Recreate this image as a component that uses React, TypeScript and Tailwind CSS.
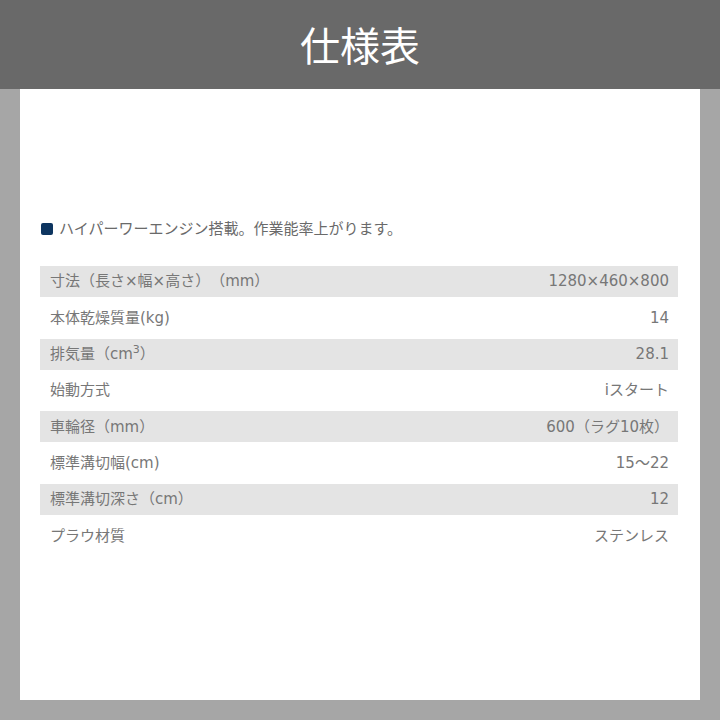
import React from "react";

const rows: { label: React.ReactNode; value: string }[] = [
  { label: "寸法（長さ×幅×高さ）（mm）", value: "1280×460×800" },
  { label: "本体乾燥質量(kg)", value: "14" },
  {
    label: (
      <>
        排気量（cm<sup className="text-[11px]">3</sup>）
      </>
    ),
    value: "28.1",
  },
  { label: "始動方式", value: "iスタート" },
  { label: "車輪径（mm）", value: "600（ラグ10枚）" },
  { label: "標準溝切幅(cm)", value: "15〜22" },
  { label: "標準溝切深さ（cm）", value: "12" },
  { label: "プラウ材質", value: "ステンレス" },
];

export default function App() {
  return (
    <div
      className="w-[720px] h-[720px] bg-[#a6a6a6] overflow-hidden [text-spacing-trim:space-all]"
      style={{ fontFamily: '"DejaVu Sans", "Noto Sans CJK JP", sans-serif' }}
    >
      <div className="h-[89px] bg-[#696969] flex items-center justify-center">
        <h1
          className="text-[40px] leading-none text-white pb-[2px]"
          style={{ fontFamily: '"Noto Sans CJK JP", sans-serif' }}
        >
          仕様表
        </h1>
      </div>
      <div className="mx-[20px] h-[611px] bg-white pl-[20px] pr-[22px] pt-[130px]">
        <div className="h-[20px] flex items-center gap-[6px]">
          <span className="w-[12px] h-[12px] rounded-[2px] bg-[#0d3560] ml-[1px]" />
          <span className="text-[15px] leading-none text-[#6a6a6a]">
            ハイパーワーエンジン搭載。作業能率上がります。
          </span>
        </div>
        <div className="mt-[27px] flex flex-col gap-[5.33px]">
          {rows.map((r, i) => (
            <div
              key={i}
              className={
                "h-[31px] flex items-center justify-between pl-[10px] pr-[9px] text-[15px] text-[#777777] " +
                (i % 2 === 0 ? "bg-[#e4e4e4]" : "bg-white")
              }
            >
              <span>{r.label}</span>
              <span>{r.value}</span>
            </div>
          ))}
        </div>
      </div>
    </div>
  );
}
